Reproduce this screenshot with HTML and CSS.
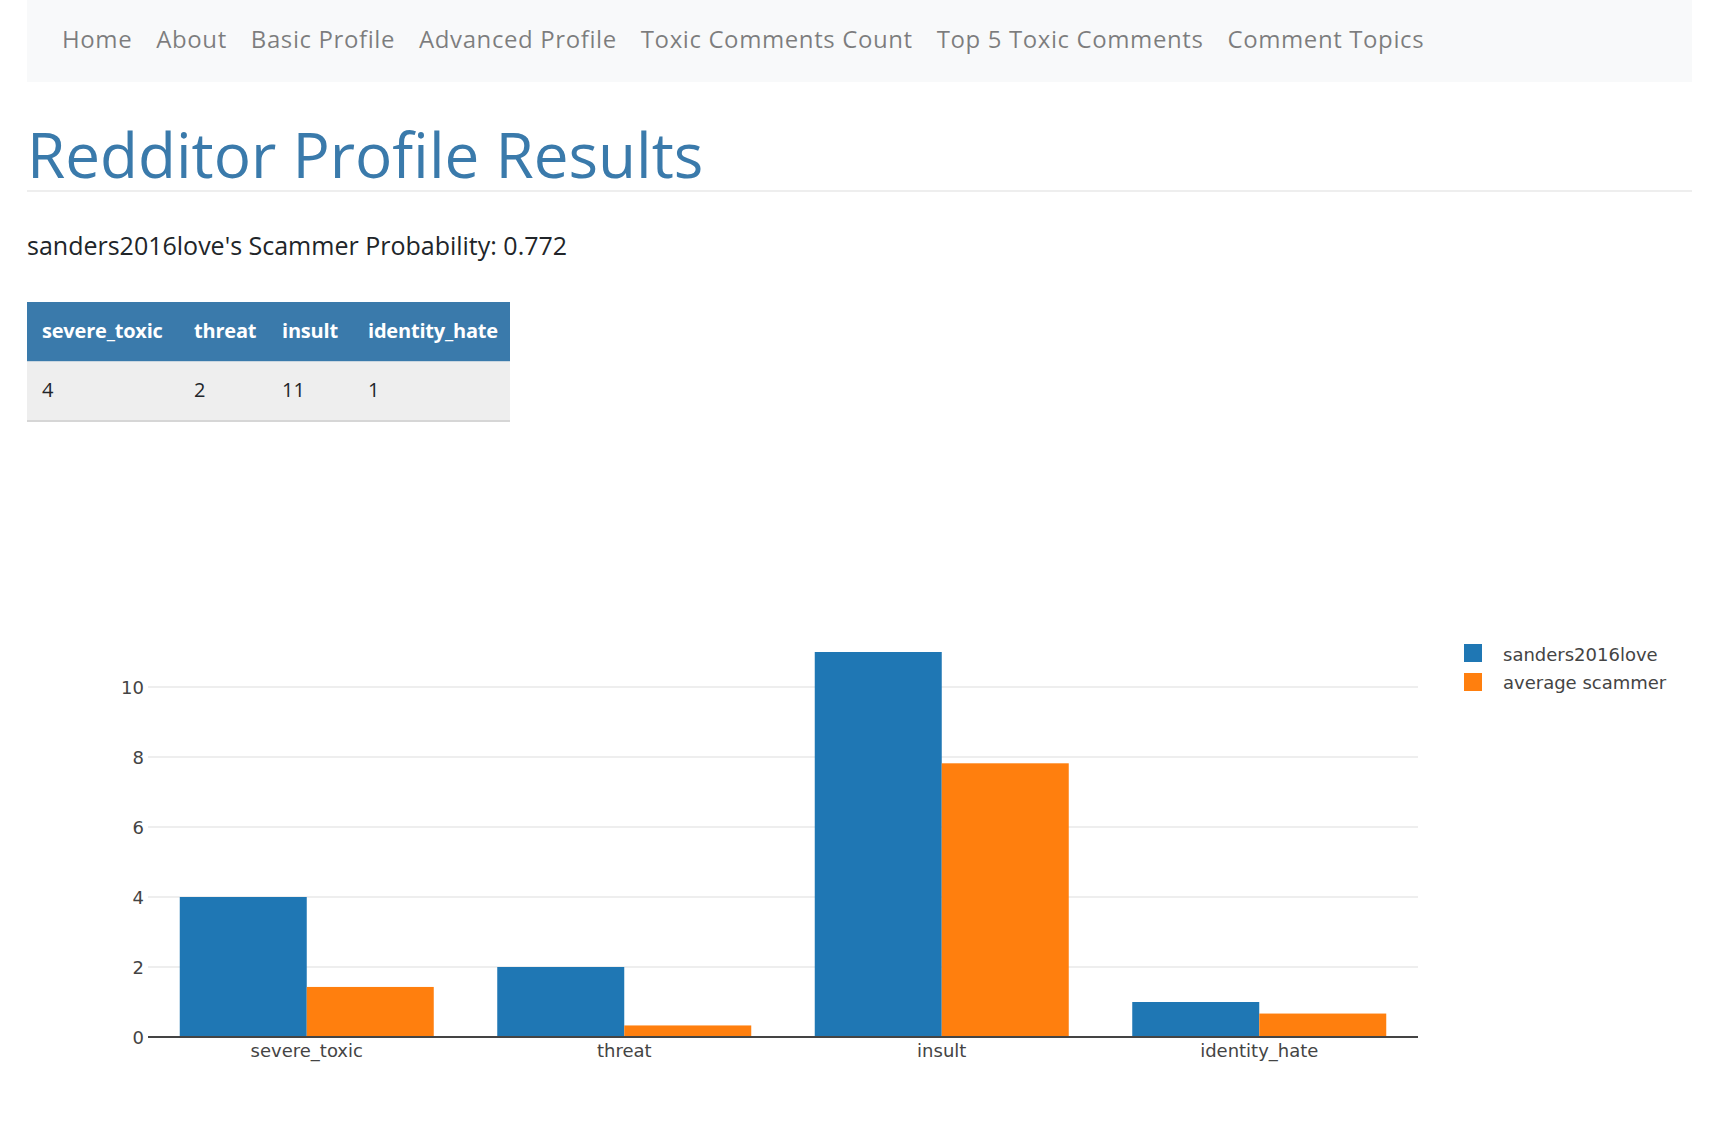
FILE: index.html
```html
<!DOCTYPE html>
<html lang="en">
<head>
<meta charset="utf-8">
<title>Redditor Profile Results</title>
<link rel="stylesheet" href="styles.css">
</head>
<body>
<nav class="navbar">
  <ul class="nav-list">
    <li><a class="nav-link" href="#">Home</a></li>
    <li><a class="nav-link" href="#">About</a></li>
    <li><a class="nav-link" href="#">Basic Profile</a></li>
    <li><a class="nav-link" href="#">Advanced Profile</a></li>
    <li><a class="nav-link" href="#">Toxic Comments Count</a></li>
    <li><a class="nav-link" href="#">Top 5 Toxic Comments</a></li>
    <li><a class="nav-link" href="#">Comment Topics</a></li>
  </ul>
</nav>
<main class="content">
  <h1 class="page-title">Redditor Profile Results</h1>
  <p class="probability">sanders2016love's Scammer Probability: 0.772</p>
  <table class="stats">
    <colgroup>
      <col class="col-a"><col class="col-b"><col class="col-c"><col class="col-d">
    </colgroup>
    <thead>
      <tr><th>severe_toxic</th><th>threat</th><th>insult</th><th>identity_hate</th></tr>
    </thead>
    <tbody>
      <tr><td>4</td><td>2</td><td>11</td><td>1</td></tr>
    </tbody>
  </table>
  <div class="chart">
    <svg class="chart-svg" width="1665" height="640" viewBox="0 0 1665 640">
      <g class="grid">
        <line x1="121" y1="205" x2="1391" y2="205"/>
        <line x1="121" y1="275" x2="1391" y2="275"/>
        <line x1="121" y1="345" x2="1391" y2="345"/>
        <line x1="121" y1="415" x2="1391" y2="415"/>
        <line x1="121" y1="485" x2="1391" y2="485"/>
      </g>
      <g class="bars-user">
        <rect x="152.75" y="415" width="127" height="140"/>
        <rect x="470.25" y="485" width="127" height="70"/>
        <rect x="787.75" y="170" width="127" height="385"/>
        <rect x="1105.25" y="520" width="127" height="35"/>
      </g>
      <g class="bars-avg">
        <rect x="279.75" y="504.95" width="127" height="50.05"/>
        <rect x="597.25" y="543.45" width="127" height="11.55"/>
        <rect x="914.75" y="281.3" width="127" height="273.7"/>
        <rect x="1232.25" y="531.55" width="127" height="23.45"/>
      </g>
      <line class="zero" x1="121" y1="555" x2="1391" y2="555"/>
      <g class="ytick">
        <text x="117" y="211.5">10</text>
        <text x="117" y="281.5">8</text>
        <text x="117" y="351.5">6</text>
        <text x="117" y="421.5">4</text>
        <text x="117" y="491.5">2</text>
        <text x="117" y="561.5">0</text>
      </g>
      <g class="xtick">
        <text x="279.75" y="575">severe_toxic</text>
        <text x="597.25" y="575">threat</text>
        <text x="914.75" y="575">insult</text>
        <text x="1232.25" y="575">identity_hate</text>
      </g>
      <g class="legend">
        <rect class="swatch-user" x="1437" y="162" width="18" height="18"/>
        <text x="1476" y="178.5">sanders2016love</text>
        <rect class="swatch-avg" x="1437" y="191" width="18" height="18"/>
        <text x="1476" y="207">average scammer</text>
      </g>
    </svg>
  </div>
</main>
</body>
</html>
```

FILE: styles.css
```css
html, body {
  margin: 0;
  background: #ffffff;
}

body {
  padding: 0 23px 0 27px;
  font-family: "Open Sans", "Noto Sans", sans-serif;
  color: #212529;
}

.navbar {
  background: #f8f9fa;
  height: 82px;
  box-sizing: border-box;
  padding: 0 23px 4px 23px;
  display: flex;
  align-items: center;
}

.nav-list {
  display: flex;
  list-style: none;
  margin: 0;
  padding: 0;
}

.nav-link {
  display: block;
  padding: 0 12px;
  font-size: 24px;
  letter-spacing: 0.6px;
  line-height: 36px;
  color: rgba(0, 0, 0, 0.5);
  text-decoration: none;
}

.content {
  display: block;
}

.page-title {
  margin: 36px 0 0 0;
  font-size: 62px;
  line-height: 72px;
  font-weight: 400;
  color: #3a7aab;
  border-bottom: 2px solid #eeeeee;
}

.probability {
  margin: 35px 0 0 0;
  font-size: 25px;
  line-height: 36px;
  color: #212529;
}

.stats {
  margin-top: 39px;
  border-collapse: collapse;
  table-layout: fixed;
  width: 483px;
  font-size: 20px;
  text-align: left;
}

.col-a { width: 152px; }
.col-b { width: 88px; }
.col-c { width: 86px; }
.col-d { width: 157px; }

.stats th {
  background: #3a7aab;
  color: #ffffff;
  font-weight: 700;
  letter-spacing: -0.2px;
  height: 56px;
  padding: 0 15px 3px 15px;
  border-bottom: 1px solid #c9d6e0;
  vertical-align: middle;
  white-space: nowrap;
  overflow: visible;
}

.stats td {
  background: #eeeeee;
  color: #212529;
  height: 55px;
  padding: 0 15px 3px 15px;
  border-bottom: 2px solid #d6d6d6;
  vertical-align: middle;
}

.chart {
  margin-top: 60px;
}

.chart-svg {
  display: block;
  font-family: "DejaVu Sans", Verdana, sans-serif;
  font-size: 18px;
}

.grid line {
  stroke: #eeeeee;
  stroke-width: 2;
}

.bars-user rect,
.swatch-user {
  fill: #1f77b4;
}

.bars-avg rect,
.swatch-avg {
  fill: #ff7f0e;
}

.zero {
  stroke: #444444;
  stroke-width: 2;
}

.ytick text {
  fill: #444444;
  text-anchor: end;
}

.xtick text {
  fill: #444444;
  text-anchor: middle;
}

.legend text {
  fill: #444444;
}
```
